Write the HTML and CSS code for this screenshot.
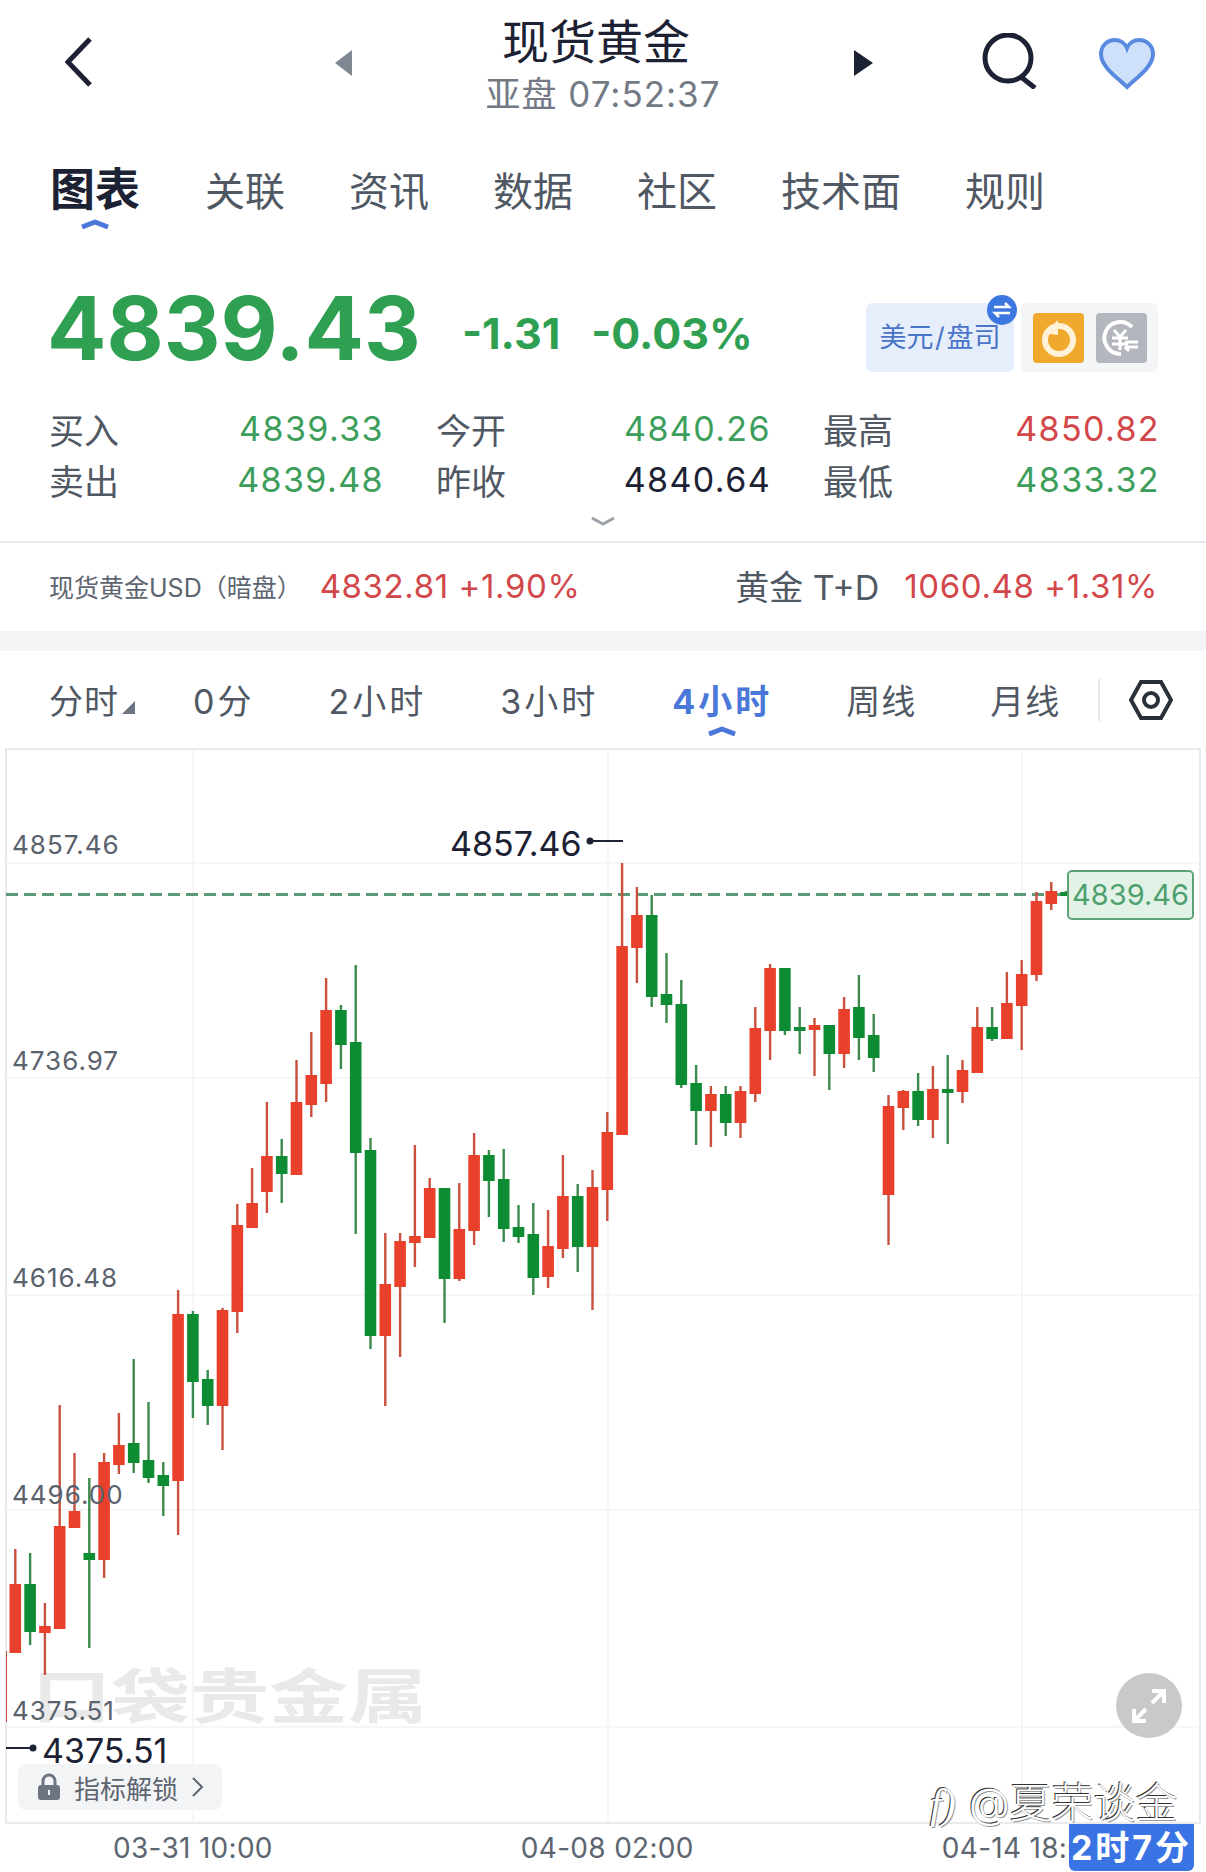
FILE: index.html
```html
<!DOCTYPE html>
<html lang="zh-CN">
<head>
  <meta charset="UTF-8" />
  <meta name="viewport" content="width=device-width, initial-scale=1" />
  <title>现货黄金</title>
  <link rel="stylesheet" href="styles.css">
</head>
<body>

<header class="top">
  <svg class="back" width="27" height="50" viewBox="0 0 27 50"><polyline points="25,2 3,25 25,48" /></svg>
  <svg class="tri" width="17" height="26" viewBox="0 0 17 26"><polygon points="17,0 17,26 0,13" fill="#7f8791" /></svg>
  <div class="title-block">
    <div class="title">现货黄金</div>
    <div class="subtitle">亚盘 07:52:37</div>
  </div>
  <svg class="tri" width="19" height="26" viewBox="0 0 19 26"><polygon points="0,0 0,26 19,13" fill="#1c2233" /></svg>
  <svg class="search" width="57" height="56" viewBox="0 0 57 56">
    <circle cx="27" cy="25" r="23" />
    <line x1="40" y1="44" x2="54" y2="55" />
  </svg>
  <svg class="heart" width="58" height="52" viewBox="0 0 58 52">
    <path d="M29 49 C20 40 3 29 3 16 C3 7 10 2 17 2 C22 2 27 5 29 10 C31 5 36 2 41 2 C48 2 55 7 55 16 C55 29 38 40 29 49 Z" />
  </svg>
</header>

<nav class="tabs">
  <a class="tab active">图表
    <svg class="caret" width="32" height="10" viewBox="0 0 32 10"><polyline points="3,8 16,3 29,8" /></svg>
  </a>
  <a class="tab">关联</a>
  <a class="tab">资讯</a>
  <a class="tab">数据</a>
  <a class="tab">社区</a>
  <a class="tab">技术面</a>
  <a class="tab">规则</a>
</nav>

<section class="price-row">
  <div class="price">4839.43</div>
  <div class="change">-1.31</div>
  <div class="change">-0.03%</div>
  <div class="unit-box">
    美元 / 盘司
    <span class="swap-badge">
      <svg width="20" height="16" viewBox="0 0 20 16"><path d="M2 5 H17 L13 1 M18 11 H3 L7 15" /></svg>
    </span>
  </div>
  <div class="mode-box">
    <span class="mode orange">
      <svg width="40" height="40" viewBox="0 0 40 40">
        <circle cx="21" cy="22" r="14" fill="none" stroke="#fff2d8" stroke-width="6" />
        <polygon points="20,2 20,17 6,15" fill="#fff2d8" />
        <path d="M21 15 V23 H13" fill="none" stroke="#f0a92c" stroke-width="2" />
      </svg>
    </span>
    <span class="mode grey">
      <svg width="40" height="40" viewBox="0 0 40 40" fill="none" stroke="#fff" stroke-width="4">
        <path d="M31 9 A16 16 0 1 0 20 36" />
        <path d="M13 12 L19 19 L25 12 M11 20 H27 M11 26 H27 M19 19 V32" stroke-width="3" />
        <path d="M24 29 H37 M37 24 L24 24 M28 33 L24 29" stroke-width="3" />
      </svg>
    </span>
  </div>
</section>

<section class="quotes">
  <div class="quote"><span class="q-label">买入</span><span class="green">4839.33</span></div>
  <div class="quote"><span class="q-label">今开</span><span class="green">4840.26</span></div>
  <div class="quote"><span class="q-label">最高</span><span class="red">4850.82</span></div>
  <div class="quote"><span class="q-label">卖出</span><span class="green">4839.48</span></div>
  <div class="quote"><span class="q-label">昨收</span><span class="dark">4840.64</span></div>
  <div class="quote"><span class="q-label">最低</span><span class="green">4833.32</span></div>
</section>

<div class="expand">
  <svg width="26" height="10" viewBox="0 0 26 10"><polyline points="2,2 13,8 24,2" /></svg>
</div>

<section class="ticker">
  <div class="ticker-group">
    <span class="ticker-name">现货黄金USD（暗盘）</span>
    <span class="red ticker-num">4832.81 +1.90%</span>
  </div>
  <div class="ticker-group">
    <span class="ticker-name big">黄金 T+D</span>
    <span class="red ticker-num">1060.48 +1.31%</span>
  </div>
</section>

<div class="band"></div>

<nav class="periods">
  <a class="period first">分时<i class="corner"></i></a>
  <a class="period digit">0分</a>
  <a class="period digit">2小时</a>
  <a class="period digit">3小时</a>
  <a class="period digit active">4小时
    <svg class="caret" width="32" height="10" viewBox="0 0 32 10"><polyline points="3,8 16,3 29,8" /></svg>
  </a>
  <a class="period">周线</a>
  <a class="period">月线</a>
  <span class="period-divider"></span>
  <svg class="hex" width="44" height="42" viewBox="0 0 44 42">
    <polygon points="12,3 32,3 42,21 32,39 12,39 2,21" />
    <circle cx="22" cy="21" r="7" />
  </svg>
</nav>

<main class="chart">
  <!-- svg uses page coordinates so the candle data reads like the screenshot -->
  <svg class="chart-svg" width="1206" height="1076" viewBox="0 749 1206 1076">
    <text class="watermark" transform="translate(32 1719) scale(1.04 0.78)">口袋贵金属</text>

    <g class="grid">
      <line x1="6" y1="864" x2="1200" y2="864" />
      <line x1="6" y1="1079" x2="1200" y2="1079" />
      <line x1="6" y1="1296" x2="1200" y2="1296" />
      <line x1="6" y1="1511" x2="1200" y2="1511" />
      <line x1="6" y1="1728" x2="1200" y2="1728" />
      <line x1="193" y1="749" x2="193" y2="1825" />
      <line x1="608" y1="749" x2="608" y2="1825" />
      <line x1="1022" y1="749" x2="1022" y2="1825" />
    </g>
    <rect class="frame" x="6" y="750" width="1194" height="1074" />

    <line class="last-line" x1="6" y1="895.5" x2="1066" y2="895.5" />
    <g id="candles"></g>

    <g class="y-labels">
      <text x="12" y="855">4857.46</text>
      <text x="12" y="1071">4736.97</text>
      <text x="12" y="1288">4616.48</text>
      <text x="12" y="1505">4496.00</text>
      <text x="12" y="1721">4375.51</text>
    </g>

    <g class="extreme">
      <text x="450" y="857">4857.46</text>
      <line x1="590" y1="842" x2="623" y2="842" />
      <circle cx="590" cy="842" r="3.5" />
      <text x="42" y="1764">4375.51</text>
      <line x1="6" y1="1749" x2="33" y2="1749" />
      <circle cx="33" cy="1749" r="3.5" />
    </g>
  </svg>

  <div class="last-tag">4839.46</div>

  <a class="unlock">
    <svg width="24" height="28" viewBox="0 0 24 28">
      <path d="M6 13 V8 A6 6 0 0 1 18 8 V13" fill="none" stroke="#6b7480" stroke-width="3" />
      <rect x="1" y="12" width="22" height="15" rx="3" fill="#6b7480" />
      <rect x="11" y="17" width="2" height="5" fill="#f3f4f6" />
    </svg>
    指标解锁
    <svg width="13" height="22" viewBox="0 0 13 22"><polyline points="2,2 11,11 2,20" fill="none" stroke="#5d6570" stroke-width="2" /></svg>
  </a>

  <div class="fullscreen">
    <svg width="38" height="38" viewBox="0 0 38 38" fill="none" stroke="#fff" stroke-width="4">
      <path d="M22 4 H34 V16 M34 4 L22 16 M4 22 V34 H16 M4 34 L16 22" />
    </svg>
  </div>

  <div class="author"><i>f)</i>@夏荣谈金</div>
</main>

<footer class="axis">
  <span>03-31 10:00</span>
  <span>04-08 02:00</span>
  <span>04-14 18:00</span>
  <div class="countdown">2时7分</div>
</footer>

<script src="chart.js"></script>
</body>
</html>
```

FILE: styles.css
```css
* {
  box-sizing: border-box;
}
body {
  margin: 0;
  width: 1206px;
  height: 1872px;
  overflow: hidden;
  background: #fff;
  color: #1c2233;
  font-family: 'Inter', 'Noto Sans CJK SC', sans-serif;
}
.green { color: #3d9e5b; }
.red { color: #d2474a; }
.dark { color: #1c2233; }

/* top bar */
.top {
  height: 118px;
  padding-left: 65px;
  display: flex;
  align-items: flex-start;
}
.back {
  margin-top: 37px;
  margin-right: 243px;
  fill: none;
  stroke: #1c2233;
  stroke-width: 5;
}
.tri {
  margin-top: 50px;
}
.title-block {
  width: 502px;
  text-align: center;
}
.title {
  font-size: 47px;
  line-height: 56px;
  margin-top: 14px;
  padding-right: 14px;
  font-weight: 400;
}
.subtitle {
  font-size: 35px;
  line-height: 40px;
  margin-top: 4px;
  letter-spacing: 1px;
  color: #737a85;
}
.search {
  margin: 33px 0 0 108px;
  fill: none;
  stroke: #1c2233;
  stroke-width: 5;
}
.heart {
  margin: 38px 0 0 60px;
  fill: #cfe0fa;
  stroke: #5a8ae0;
  stroke-width: 4;
}

/* main tabs */
.tabs {
  height: 60px;
  margin-top: 41px;
  padding-left: 50px;
  display: flex;
  align-items: center;
  gap: 64px;
  font-size: 40px;
  color: #505863;
}
.tab {
  position: relative;
}
.tab.active {
  top: -3px;
  font-size: 45px;
  font-weight: 700;
  color: #1c2233;
  margin-right: 1px;
}
.caret {
  position: absolute;
  left: 50%;
  bottom: -12px;
  margin-left: -16px;
  fill: none;
  stroke: #4a78d8;
  stroke-width: 5;
  stroke-linejoin: round;
}
.tab .caret {
  bottom: -10px;
}

/* price */
.price-row {
  height: 96px;
  margin-top: 61px;
  padding: 0 48px 0 47px;
  display: flex;
  align-items: flex-start;
}
.price {
  font-size: 88px;
  line-height: 96px;
  font-weight: 700;
  color: #2fa052;
  margin-right: 41px;
}
.change {
  font-size: 43px;
  line-height: 48px;
  font-weight: 700;
  margin-top: 29px;
  margin-right: 31px;
  color: #2fa052;
}
.unit-box {
  position: relative;
  margin: 23px 0 0 auto;
  width: 148px;
  height: 69px;
  border-radius: 6px;
  background: #e6eefc;
  color: #4a74c8;
  font-size: 27px;
  line-height: 69px;
  text-align: center;
  white-space: nowrap;
  word-spacing: -6px;
}
.swap-badge {
  position: absolute;
  top: -8px;
  right: -3px;
  width: 30px;
  height: 30px;
  border-radius: 50%;
  background: #3c78e0;
  display: flex;
  align-items: center;
  justify-content: center;
}
.swap-badge svg {
  fill: none;
  stroke: #fff;
  stroke-width: 2.5;
}
.mode-box {
  margin: 23px 0 0 7px;
  width: 137px;
  height: 69px;
  border-radius: 6px;
  background: #f4f5f7;
  display: flex;
  align-items: center;
  justify-content: center;
  gap: 12px;
}
.mode {
  width: 51px;
  height: 50px;
  border-radius: 4px;
  display: flex;
  align-items: center;
  justify-content: center;
}
.mode.orange { background: #f0a92c; }
.mode.grey { background: #b4b6bd; }

/* quote table */
.quotes {
  margin-top: 27px;
  padding-left: 49px;
  display: grid;
  grid-template-columns: 333px 333px 335px;
  grid-auto-rows: 51px;
  column-gap: 54px;
  font-size: 34px;
  letter-spacing: 1.4px;
}
.quote {
  display: flex;
  justify-content: space-between;
  align-items: center;
}
.quote span:last-child {
  margin-right: -2px;
}
.q-label {
  font-size: 35px;
  letter-spacing: 0;
  color: #505863;
}
.expand {
  height: 38px;
  display: flex;
  justify-content: center;
  padding-top: 11px;
  border-bottom: 2px solid #e8e9eb;
}
.expand svg {
  fill: none;
  stroke: #9aa0a8;
  stroke-width: 3;
}

/* related tickers */
.ticker {
  height: 88px;
  padding: 0 48px 3px 49px;
  display: flex;
  justify-content: space-between;
  align-items: center;
}
.ticker-group {
  display: flex;
  align-items: center;
  gap: 25px;
}
.ticker-group:first-child {
  gap: 18px;
}
.ticker-name {
  font-size: 25px;
  color: #5d6570;
}
.ticker-name.big {
  font-size: 34px;
  color: #505863;
}
.ticker-num {
  font-size: 33px;
  letter-spacing: 0.6px;
}
.band {
  height: 20px;
  background: #f4f5f7;
}

/* chart period tabs */
.periods {
  height: 97px;
  padding-left: 49px;
  display: flex;
  align-items: center;
  gap: 74px;
  font-size: 34px;
  color: #505863;
}
.period {
  position: relative;
  letter-spacing: 1px;
  white-space: nowrap;
}
.period.digit {
  letter-spacing: 3px;
}
.period.first {
  margin-right: -16px;
}
.period.active {
  font-weight: 700;
  color: #4a78d8;
}
.corner {
  display: inline-block;
  width: 0;
  height: 0;
  margin-left: 3px;
  border-left: 13px solid transparent;
  border-bottom: 13px solid #6b7480;
}
.period-divider {
  width: 2px;
  height: 42px;
  margin-left: -36px;
  background: #e4e5e7;
}
.hex {
  margin-left: -45px;
  fill: none;
  stroke: #2a3038;
  stroke-width: 4;
}

/* chart */
.chart {
  position: relative;
  height: 1076px;
}
.chart-svg {
  display: block;
}
.frame {
  fill: none;
  stroke: #e9eaec;
  stroke-width: 2;
}
.grid line {
  stroke: #f3f3f4;
  stroke-width: 1.5;
}
.watermark {
  font-size: 76px;
  font-weight: 700;
  fill: #e9e9e9;
}
.last-line {
  stroke: #5a9a76;
  stroke-width: 3;
  stroke-dasharray: 12 6;
}
.y-labels text {
  font-size: 26px;
  letter-spacing: 1px;
  fill: #5a626d;
}
.extreme text {
  font-size: 34px;
  fill: #1c2233;
}
.extreme line {
  stroke: #1c2233;
  stroke-width: 2;
}
.extreme circle {
  fill: #1c2233;
}
.last-tag {
  position: absolute;
  left: 1067px;
  top: 122px;
  width: 127px;
  height: 50px;
  border: 2px solid #5da378;
  border-radius: 5px;
  background: #e3f2e6;
  color: #4ea06f;
  font-size: 29px;
  line-height: 46px;
  text-align: center;
}
.unlock {
  position: absolute;
  left: 18px;
  top: 1016px;
  width: 204px;
  height: 46px;
  border-radius: 8px;
  background: #f3f4f6;
  color: #5d6570;
  font-size: 26px;
  display: flex;
  align-items: center;
  gap: 13px;
  padding-left: 19px;
}
.fullscreen {
  position: absolute;
  left: 1116px;
  top: 925px;
  width: 66px;
  height: 65px;
  border-radius: 50%;
  background: #c9c9c9;
  display: flex;
  align-items: center;
  justify-content: center;
}
.author {
  position: absolute;
  left: 930px;
  top: 1031px;
  font-size: 42px;
  line-height: 48px;
  font-weight: 300;
  color: #fff;
  text-shadow: -1px -1px 0 #333, 1px 1px 0 #999;
  white-space: nowrap;
}
.author i {
  font-family: 'Liberation Serif', serif;
  margin-right: 13px;
}

/* time axis */
.axis {
  position: relative;
  height: 47px;
  padding-left: 113px;
  display: flex;
  align-items: center;
  gap: 248px;
  font-size: 28px;
  letter-spacing: 0.3px;
  color: #5d6570;
  white-space: nowrap;
}
.countdown {
  position: absolute;
  left: 1069px;
  top: 0;
  width: 125px;
  height: 47px;
  border-radius: 0 0 6px 6px;
  background: #3a74e4;
  color: #fff;
  font-size: 34px;
  font-weight: 700;
  letter-spacing: 3px;
  line-height: 47px;
  text-align: center;
}
```

FILE: chart.js
```js
// high, body top, body bottom, low (page y), colour
const candles = [
  [1550, 1585, 1654, 1654, 'r'], [1554, 1585, 1633, 1646, 'g'], [1604, 1627, 1634, 1676, 'r'],
  [1406, 1527, 1630, 1630, 'r'], [1454, 1512, 1529, 1529, 'r'], [1479, 1554, 1561, 1649, 'g'],
  [1454, 1463, 1561, 1579, 'r'], [1414, 1446, 1466, 1475, 'r'], [1360, 1444, 1464, 1474, 'g'],
  [1403, 1461, 1479, 1484, 'g'], [1463, 1476, 1487, 1517, 'g'], [1291, 1315, 1482, 1536, 'r'],
  [1312, 1315, 1383, 1419, 'g'], [1371, 1380, 1407, 1426, 'g'], [1309, 1311, 1407, 1451, 'r'],
  [1205, 1226, 1313, 1334, 'r'], [1169, 1204, 1229, 1229, 'r'], [1103, 1157, 1193, 1214, 'r'],
  [1140, 1157, 1175, 1204, 'g'], [1061, 1103, 1176, 1176, 'r'], [1033, 1076, 1106, 1118, 'r'],
  [979, 1011, 1085, 1103, 'r'], [1006, 1011, 1046, 1070, 'g'], [966, 1043, 1154, 1235, 'g'],
  [1139, 1151, 1337, 1350, 'g'], [1234, 1285, 1337, 1407, 'r'], [1234, 1242, 1288, 1358, 'r'],
  [1146, 1237, 1244, 1268, 'r'], [1179, 1189, 1239, 1239, 'r'], [1189, 1189, 1280, 1324, 'g'],
  [1184, 1230, 1280, 1282, 'r'], [1134, 1156, 1232, 1246, 'r'], [1151, 1156, 1182, 1218, 'g'],
  [1150, 1180, 1230, 1243, 'g'], [1206, 1228, 1238, 1244, 'g'], [1204, 1235, 1279, 1296, 'g'],
  [1211, 1247, 1278, 1289, 'r'], [1156, 1197, 1250, 1259, 'r'], [1185, 1197, 1248, 1273, 'g'],
  [1171, 1188, 1248, 1311, 'r'], [1113, 1133, 1191, 1222, 'r'], [864, 947, 1136, 1136, 'r'],
  [888, 916, 949, 984, 'r'], [896, 916, 998, 1008, 'g'], [954, 995, 1006, 1024, 'g'],
  [981, 1005, 1086, 1089, 'g'], [1066, 1084, 1112, 1146, 'g'], [1087, 1095, 1112, 1148, 'r'],
  [1087, 1095, 1124, 1137, 'g'], [1087, 1092, 1124, 1139, 'r'], [1008, 1029, 1095, 1103, 'r'],
  [965, 969, 1032, 1061, 'r'], [969, 969, 1032, 1036, 'g'], [1008, 1028, 1032, 1055, 'g'],
  [1019, 1026, 1031, 1077, 'r'], [1026, 1026, 1055, 1091, 'g'], [998, 1010, 1055, 1069, 'r'],
  [976, 1008, 1039, 1061, 'g'], [1015, 1036, 1059, 1073, 'g'], [1096, 1107, 1196, 1246, 'r'],
  [1091, 1092, 1109, 1131, 'r'], [1074, 1092, 1121, 1127, 'g'], [1067, 1090, 1121, 1139, 'r'],
  [1056, 1090, 1094, 1145, 'g'], [1061, 1071, 1093, 1104, 'r'], [1008, 1028, 1074, 1074, 'r'],
  [1008, 1028, 1040, 1042, 'g'], [973, 1004, 1040, 1040, 'r'], [961, 975, 1007, 1051, 'r'],
  [893, 902, 976, 982, 'r'], [883, 892, 905, 911, 'r'], [892, 893, 897, 897, 'g']
];

const colors = {
  r: { body: '#e8402a', wick: '#c9503f' },
  g: { body: '#0e8c33', wick: '#3a8a4c' }
};
const firstX = 15.3;
const step = 14.8;
const bodyWidth = 11.6;
const group = document.getElementById('candles');

function addRect(x, y, w, h, fill) {
  const rect = document.createElementNS('http://www.w3.org/2000/svg', 'rect');
  rect.setAttribute('x', x);
  rect.setAttribute('y', y);
  rect.setAttribute('width', w);
  rect.setAttribute('height', h);
  rect.setAttribute('fill', fill);
  group.appendChild(rect);
}

// bit of wick from the candle cut off by the left edge
addRect(6, 1652, 1, 71, colors.r.wick);

candles.forEach(function(c, i) {
  const x = firstX + i * step;
  const color = colors[c[4]];
  addRect(x - 1.2, c[0], 2.4, c[3] - c[0], color.wick);
  addRect(x - bodyWidth / 2, c[1], bodyWidth, c[2] - c[1], color.body);
});
```
